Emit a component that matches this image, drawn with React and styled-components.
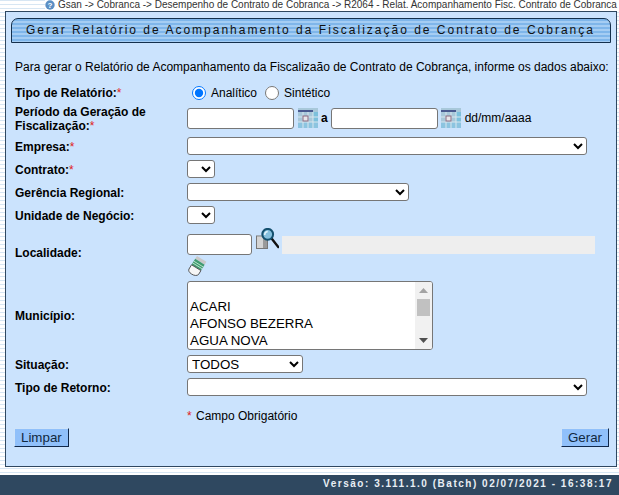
import React from "react";
import styled, { createGlobalStyle } from "styled-components";

const GlobalStyle = createGlobalStyle`
  html, body {
    margin: 0;
    padding: 0;
    background: #fff;
  }
  body {
    font-family: "Liberation Sans", Arial, sans-serif;
    font-size: 12px;
    color: #000;
  }
`;

const Page = styled.div`
  width: 619px;
  height: 495px;
  overflow: hidden;
  display: flex;
  flex-direction: column;
  background: repeating-linear-gradient(to bottom, #d7e6f3 0, #d7e6f3 1px, #fff 1px, #fff 4px);
`;

const Breadcrumb = styled.div`
  height: 11px;
  margin-left: 45px;
  background: #fff;
  display: flex;
  align-items: flex-start;
  gap: 3px;
  font-size: 10px;
  line-height: 10px;
  color: #333;
  white-space: nowrap;
  overflow: hidden;
`;

const Panel = styled.main`
  box-sizing: border-box;
  width: 612px;
  height: 456px;
  margin-left: 5px;
  border: 1px solid #2f4860;
  background: #cbe3fd;
  padding: 6px 5px 0 5px;
  display: flex;
  flex-direction: column;
`;

const TitleBar = styled.h1`
  box-sizing: border-box;
  height: 25px;
  margin: 0;
  border: 1px solid #14304c;
  border-radius: 7px 7px 0 0;
  background: repeating-linear-gradient(to bottom, #7fb6ea 0, #7fb6ea 2px, #a5cdf3 2px, #a5cdf3 4px);
  font-size: 12px;
  font-weight: normal;
  letter-spacing: 2px;
  line-height: 23px;
  padding-left: 14px;
  color: #111;
  white-space: nowrap;
`;

const Intro = styled.p`
  margin: 17px 0 0 4px;
  line-height: 14px;
  font-size: 12px;
  white-space: nowrap;
`;

const Form = styled.form`
  margin: 9px 0 0 4px;
  display: flex;
  flex-direction: column;
`;

const Row = styled.div`
  display: grid;
  grid-template-columns: 172px 1fr;
  align-items: center;
  min-height: ${(p) => p.$h || 23}px;
`;

const Label = styled.label`
  padding-top: ${(p) => p.$pt ?? 2}px;
  font-weight: bold;
  line-height: 14px;
`;

const Req = styled.span`
  color: #e02020;
  font-weight: normal;
`;

const Inline = styled.div`
  display: flex;
  align-items: center;
  gap: ${(p) => p.$gap ?? 4}px;
`;

const Radio = styled.input.attrs({ type: "radio" })`
  width: 14px;
  height: 14px;
  margin: 0 5px 0 ${(p) => p.$ml ?? 5}px;
`;

const TextBox = styled.input`
  box-sizing: border-box;
  width: ${(p) => p.$w}px;
  height: 21px;
  margin: 0 ${(p) => p.$mr || 0}px 0 0;
  border: 1px solid #767676;
  border-radius: 3px;
  background: #fff;
  padding: 0 2px;
`;

const DateHint = styled.span`
  margin-left: 1px;
`;

const Select = styled.select`
  box-sizing: border-box;
  display: block;
  width: ${(p) => p.$w}px;
  height: 18px;
  margin: 0;
  border: 1px solid #767676;
  border-radius: 3px;
  background-color: #fff;
  color: #000;
  font-family: "Liberation Sans", Arial, sans-serif;
  font-size: 13.33px;
`;

const ListBox = styled.div`
  box-sizing: border-box;
  width: 246px;
  height: 69px;
  margin-top: 2px;
  border: 1px solid #767676;
  border-radius: 3px;
  background: #fff;
  display: flex;
  overflow: hidden;
`;

const ListItems = styled.ul`
  flex: 1;
  margin: 0;
  padding: 0;
  list-style: none;
  font-size: 13.33px;
`;

const ListItem = styled.li`
  height: ${(p) => (p.$blank ? 16 : 17)}px;
  line-height: 17px;
  padding-left: 2px;
  white-space: nowrap;
`;

const ScrollTrack = styled.div`
  width: 17px;
  background: #f1f1f1;
  display: flex;
  flex-direction: column;
  justify-content: space-between;
`;

const ScrollArrow = styled.div`
  height: 17px;
  display: flex;
  align-items: center;
  justify-content: center;
`;

const ScrollThumb = styled.div`
  width: 13px;
  height: 17px;
  margin: 0 2px;
  background: #c1c1c1;
`;

const ScrollTop = styled.div`
  display: flex;
  flex-direction: column;
`;

const ReadOnlyBar = styled.div`
  width: 313px;
  height: 18px;
  margin-left: -1px;
  background: #eeeeee;
`;

const LocalityField = styled.div`
  align-self: start;
  margin-top: 8px;
  display: flex;
  flex-direction: column;
  gap: 1px;
`;

const LensSlot = styled.span`
  display: block;
  width: 23px;
  height: 21px;
  margin-top: -12px;
`;

const EraserSlot = styled.span`
  display: block;
  width: 20px;
  height: 20px;
  margin-left: 1px;
`;

const Legend = styled.div`
  margin: 11px 0 0 172px;
  line-height: 14px;
  font-size: 12px;
`;

const LegendText = styled.span`
  margin-left: 1px;
`;

const Actions = styled.div`
  margin: 5px 0 0 -1px;
  display: flex;
  justify-content: space-between;
  padding-right: 2px;
`;

const Button = styled.button`
  box-sizing: border-box;
  height: 19px;
  padding: 0 6px;
  margin: 0;
  border: 1px solid;
  border-color: #cfe4fa #10284a #10284a #cfe4fa;
  background: #90c0fa;
  color: #10283e;
  font-family: "Liberation Sans", Arial, sans-serif;
  font-size: 13.33px;
  line-height: 16px;
`;

const Footer = styled.footer`
  margin-top: 8px;
  flex: 1;
  background: #2f4860;
  color: #e8eef4;
  font-size: 10px;
  font-weight: bold;
  letter-spacing: 1.52px;
  text-align: right;
  padding: 3px 6px 0 0;
  line-height: 12px;
  white-space: nowrap;
`;

const HelpIcon = () => (
  <svg width="10" height="10" viewBox="0 0 10 10">
    <circle cx="5" cy="5" r="4.700" fill="#5b8fc4" />
    <text x="5" y="8" fontSize="8" fontWeight="bold" fill="#fff" textAnchor="middle" fontFamily="Liberation Sans">?</text>
  </svg>
);

const CalendarIcon = () => (
  <svg width="20" height="20" viewBox="0 0 20 20">
    <rect x="0" y="0" width="20" height="20" fill="#a8c8da" />
    <rect x="0" y="2" width="15" height="2" fill="#4a5a90" />
    <rect x="15" y="4" width="5" height="16" fill="#7cc0dc" />
    <rect x="0" y="14" width="20" height="6" fill="#8cc4e0" />
    <path d="M0 9h20M0 14h20M5 4v16M10 4v16M15 4v16" stroke="#d8e6ee" strokeWidth="1" />
    <rect x="5" y="8" width="5" height="5" fill="#e8e6ea" stroke="#8a6a80" />
  </svg>
);

const LensIcon = () => (
  <svg width="23" height="21" viewBox="0 0 23 21">
    <rect x="0.500" y="8" width="11" height="12.500" fill="#9a9a9a" stroke="#777" />
    <path d="M1 8.500h6v11.500H1z" fill="#d4d4d4" />
    <path d="M16 11l6.300 8" stroke="#111" strokeWidth="2.400" strokeLinecap="round" />
    <circle cx="11.700" cy="6.300" r="5.400" fill="#86c0de" stroke="#14506e" strokeWidth="2" />
    <path d="M8.700 7a3.500 3.500 0 0 1 3-3.500" stroke="#e4f4fb" strokeWidth="1.400" fill="none" />
  </svg>
);

const EraserIcon = () => (
  <svg width="20" height="20" viewBox="0 0 20 20">
    <path d="M9 0L18.400 5.700 16.600 8.650 7.200 2.850z" fill="#c8c8c8" />
    <path d="M7.200 2.850L16.600 8.650 12.950 14.600 3.550 8.800z" fill="#3f9a70" />
    <path d="M6 5.300l9.400 5.800M4.800 7l9.400 5.800" stroke="#b8e2c8" strokeWidth="1" />
    <path d="M3.550 8.800L12.950 14.600 10.500 18.500C9 20 6 19.700 3.500 18 1 16.400 .2 14.500 1 13z" fill="#f6f6f6" stroke="#444" strokeWidth="0.900" />
  </svg>
);

const App = () => {
  return (
    <>
      <GlobalStyle />
      <Page>
        <Breadcrumb>
          <HelpIcon />
          <span>Gsan -&gt; Cobranca -&gt; Desempenho de Contrato de Cobranca -&gt; R2064 - Relat. Acompanhamento Fisc. Contrato de Cobranca</span>
        </Breadcrumb>
        <Panel>
          <TitleBar>Gerar Relatório de Acompanhamento da Fiscalização de Contrato de Cobrança</TitleBar>
          <Intro>Para gerar o Relatório de Acompanhamento da Fiscalizaão de Contrato de Cobrança, informe os dados abaixo:</Intro>
          <Form>
            <Row $h={19}>
              <Label $pt={0}>Tipo de Relatório:<Req>*</Req></Label>
              <Inline $gap={0}>
                <Radio name="tipo" defaultChecked />
                <span>Analítico</span>
                <Radio name="tipo" $ml={8} />
                <span>Sintético</span>
              </Inline>
            </Row>
            <Row $h={32}>
              <Label>Período da Geração de<br />Fiscalização:<Req>*</Req></Label>
              <Inline $gap={3}>
                <TextBox $w={107} $mr={1} />
                <CalendarIcon />
                <b>a</b>
                <TextBox $w={107} />
                <CalendarIcon />
                <DateHint>dd/mm/aaaa</DateHint>
              </Inline>
            </Row>
            <Row>
              <Label>Empresa:<Req>*</Req></Label>
              <div><Select $w={400}><option /></Select></div>
            </Row>
            <Row>
              <Label>Contrato:<Req>*</Req></Label>
              <div><Select $w={28}><option /></Select></div>
            </Row>
            <Row>
              <Label>Gerência Regional:</Label>
              <div><Select $w={222}><option /></Select></div>
            </Row>
            <Row>
              <Label>Unidade de Negócio:</Label>
              <div><Select $w={28}><option /></Select></div>
            </Row>
            <Row $h={50}>
              <Label $pt={4}>Localidade:</Label>
              <LocalityField>
                <Inline $gap={4}>
                  <TextBox $w={65} />
                  <LensSlot><LensIcon /></LensSlot>
                  <ReadOnlyBar />
                </Inline>
                <EraserSlot><EraserIcon /></EraserSlot>
              </LocalityField>
            </Row>
            <Row $h={76}>
              <Label $pt={4}>Município:</Label>
              <ListBox>
                <ListItems>
                  <ListItem $blank />
                  <ListItem>ACARI</ListItem>
                  <ListItem>AFONSO BEZERRA</ListItem>
                  <ListItem>AGUA NOVA</ListItem>
                </ListItems>
                <ScrollTrack>
                  <ScrollTop>
                    <ScrollArrow>
                      <svg width="9" height="5" viewBox="0 0 9 5"><path d="M4.500 0L9 5H0z" fill="#a3a3a3" /></svg>
                    </ScrollArrow>
                    <ScrollThumb />
                  </ScrollTop>
                  <ScrollArrow>
                    <svg width="9" height="5" viewBox="0 0 9 5"><path d="M0 0h9L4.500 5z" fill="#505050" /></svg>
                  </ScrollArrow>
                </ScrollTrack>
              </ListBox>
            </Row>
            <Row>
              <Label>Situação:</Label>
              <div><Select $w={116}><option>TODOS</option></Select></div>
            </Row>
            <Row>
              <Label>Tipo de Retorno:</Label>
              <div><Select $w={400}><option /></Select></div>
            </Row>
            <Legend><Req>*</Req> <LegendText>Campo Obrigatório</LegendText></Legend>
            <Actions>
              <Button type="button">Limpar</Button>
              <Button type="button">Gerar</Button>
            </Actions>
          </Form>
        </Panel>
        <Footer>Versão: 3.111.1.0 (Batch) 02/07/2021 - 16:38:17</Footer>
      </Page>
    </>
  );
};

export default App;
